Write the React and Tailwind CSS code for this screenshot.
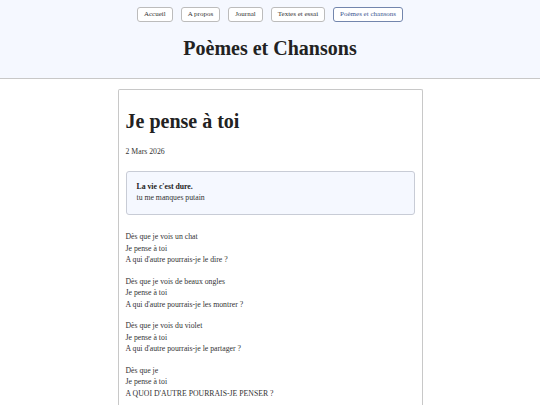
export default function App() {
  const nav = ['Accueil', 'A propos', 'Journal', 'Textes et essai', 'Poèmes et chansons']
  const active = 'Poèmes et chansons'

  const stanzas = [
    ['Dès que je vois un chat', 'Je pense à toi', "A qui d'autre pourrais-je le dire ?"],
    ['Dès que je vois de beaux ongles', 'Je pense à toi', "A qui d'autre pourrais-je les montrer ?"],
    ['Dès que je vois du violet', 'Je pense à toi', "A qui d'autre pourrais-je le partager ?"],
    ['Dès que je', 'Je pense à toi', "A QUOI D'AUTRE POURRAIS-JE PENSER ?"],
  ]

  return (
    <div className="min-h-screen bg-white font-['Liberation_Serif',serif] text-[#222]">
      {/* Header */}
      <header className="bg-[#f5f8ff] border-b border-[#c8c8c8] pt-[7px] pb-[18px]">
        <nav className="flex justify-center gap-[8px]">
          {nav.map(item => (
            <a
              key={item}
              className={
                item === active
                  ? 'flex items-center h-[15px] px-[6px] rounded-[3px] border border-[#7386ad] bg-white text-[7px] text-[#3d5791]'
                  : 'flex items-center h-[15px] px-[6px] rounded-[3px] border border-[#bcbcbc] bg-white text-[7px] text-[#333]'
              }
            >
              {item}
            </a>
          ))}
        </nav>
        <h1 className="mt-[14px] text-center text-[20px] leading-[24px] font-bold text-[#222]">Poèmes et Chansons</h1>
      </header>

      {/* Article card */}
      <main className="mx-auto mt-[10px] w-[305px] border border-b-0 border-[#c8c8c8] rounded-t-[2px] px-[7px] pt-[19px] pb-[20px]">
        <h2 className="text-[20px] leading-[24px] font-bold text-[#222]">Je pense à toi</h2>
        <p className="mt-[13px] text-[7.75px] leading-[11px] text-[#333]">2 Mars 2026</p>

        <div className="mt-[14px] bg-[#f5f8ff] border border-[#c8ccd6] rounded-[3px] px-[10px] pt-[9px] pb-[11px]">
          <p className="text-[7.75px] leading-[11px] font-bold text-[#222]">La vie c'est dure.</p>
          <p className="text-[7.75px] leading-[11px] text-[#333]">tu me manques putain</p>
        </div>

        <div className="mt-[16px] flex flex-col gap-[10px]">
          {stanzas.map((lines, i) => (
            <div key={i} className="text-[7.75px] leading-[11.5px] text-[#333]">
              {lines.map((l, j) => (
                <p key={j}>{l}</p>
              ))}
            </div>
          ))}
        </div>
      </main>
    </div>
  )
}
